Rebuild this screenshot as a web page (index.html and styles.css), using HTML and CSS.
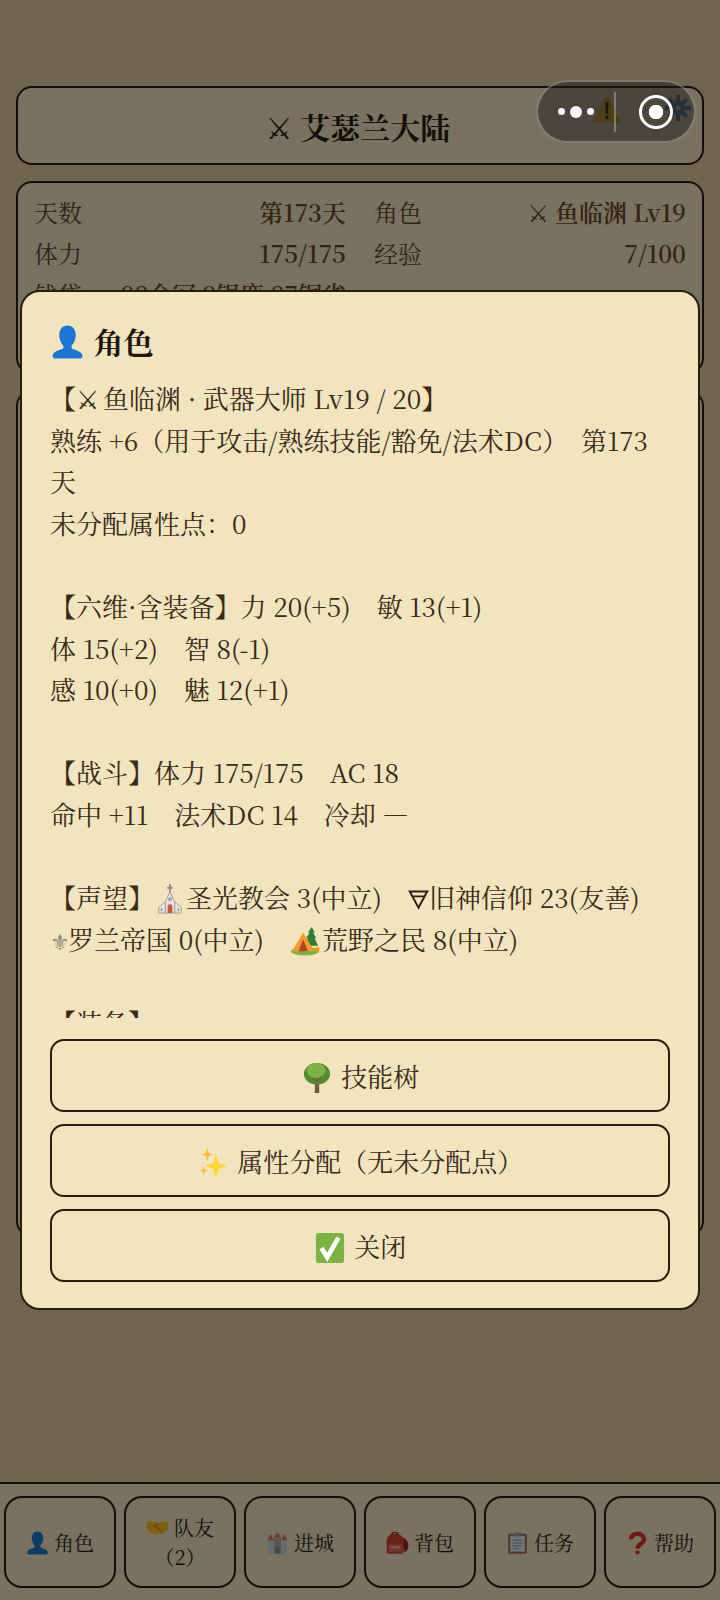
FILE: index.html
```html
<!DOCTYPE html>
<html lang="zh-CN">
<head>
  <meta charset="UTF-8">
  <title>艾瑟兰大陆</title>
  <meta name="viewport" content="width=device-width, initial-scale=1.0">
  <link rel="stylesheet" href="styles.css">
</head>
<body>

  <svg class="defs" width="0" height="0">
    <symbol id="i-person" viewBox="0 0 32 32">
      <path fill="#1976d2" d="M16 0c5 0 8 4 8 9.500 0 4-2 8-4 10v2.500c2 2 9.500 2 10.500 7 0 1.500-1 3-2 3h-25c-1 0-2-1.500-2-3 1-5 8.500-5 10.500-7v-2.500c-2-2-4-6-4-10C8 4 11 0 16 0z"/>
    </symbol>
    <symbol id="i-church" viewBox="0 0 32 32">
      <path fill="#a1887f" d="M15 0h2v3h2v2h-2v4h-2V5h-2V3h2z"/>
      <path fill="#e6e2dd" stroke="#a89a94" d="M16 8l5 11v12H11V19z"/>
      <path fill="#e6e2dd" stroke="#a89a94" d="M11 19l-7 6v6h7zM21 19l7 6v6h-7z"/>
      <path fill="#c8553d" d="M13.500 31v-7a2.500 2.500 0 0 1 5 0v7z"/>
      <circle cx="16" cy="16" r="2" fill="#90a4ae"/>
      <path fill="#90a4ae" d="M6 26h2v3H6zM24 26h2v3h-2z"/>
    </symbol>
    <symbol id="i-earth" viewBox="0 0 24 24">
      <path fill="none" stroke="#2b1d0e" stroke-width="2.200" d="M2 3.500h20L12 22zM6 9h12"/>
    </symbol>
    <symbol id="i-tent" viewBox="0 0 32 32">
      <path fill="#2e7d32" d="M22 1l3.500 6h-2l3.500 6h-2l4 8H14l4-8h-2l4-6h-2z"/>
      <ellipse cx="15" cy="27" rx="15" ry="4.500" fill="#7cb342"/>
      <path fill="#f59a2e" d="M13 7L1 27h24z"/>
      <path fill="#b3471d" d="M13 14L8 27h10z"/>
      <circle cx="28" cy="25" r="2.500" fill="#ff9800"/>
    </symbol>
    <symbol id="i-tree" viewBox="0 0 32 32">
      <path fill="#795548" d="M14 18h4l.500 14h-5z"/>
      <ellipse cx="16" cy="11.500" rx="14" ry="11.500" fill="#558b2f"/>
      <ellipse cx="15" cy="8" rx="10" ry="8" fill="#7cb342"/>
      <path fill="none" stroke="#795548" stroke-width="1.500" d="M16 20l-5-4M16 20l5-5"/>
    </symbol>
    <symbol id="i-spark" viewBox="0 0 32 32">
      <path fill="#fdd835" d="M19 6l3 10 9 3-9 3-3 10-3-10-9-3 9-3z"/>
      <path fill="#fbb829" d="M10 0l1.500 5.500L16 7l-4.500 1.500L10 14 8.500 8.500 4 7l4.500-1.500zM6 19l1 4 3.500 1-3.500 1-1 5-1-5L1.500 24 5 23z"/>
    </symbol>
    <symbol id="i-check" viewBox="0 0 32 32">
      <rect x="1" y="0" width="30" height="32" rx="3" fill="#7cb342"/>
      <path fill="none" stroke="#fff" stroke-width="5" d="M7 16l6 10L25 5"/>
    </symbol>
    <symbol id="i-hands" viewBox="0 0 32 32">
      <path fill="#fcc21b" d="M1 8c5-2 9-1 15 1 6-2 10-3 15-1v9c-2 4-8 8-15 8S3 21 1 17z"/>
      <path fill="none" stroke="#c98a10" stroke-width="1.500" d="M11 12l6 5 5 5M16 9l-4 5"/>
    </symbol>
    <symbol id="i-castle" viewBox="0 0 32 32">
      <path fill="#cfd8dc" d="M3 12h7v6h12v-6h7v19H3z"/>
      <path fill="#bcaaa4" d="M11 8h10v23H11z"/>
      <path fill="#e2725b" d="M2 12l4.500-9L11 12zM21 12l4.500-9L30 12zM11 8l5-7 5 7z"/>
      <path fill="#78909c" d="M13 31v-7a3 3 0 0 1 6 0v7z"/>
    </symbol>
    <symbol id="i-bag" viewBox="0 0 32 32">
      <path fill="#9c2a1c" d="M22 8c6 1 10 7 9 14-.500 4-3 6-6 7z"/>
      <path fill="#d9432f" d="M4 31c-2 0-3-1-3-3V13C1 6 6 3 12.500 3S24 6 24 13v15c0 2-1 3-3 3z"/>
      <path fill="none" stroke="#9c2a1c" stroke-width="2" d="M8 5c0-5 9-5 9 0"/>
      <rect x="3" y="18" width="19" height="10" rx="2" fill="#e8705c"/>
      <path fill="#f6c9a0" d="M6 21h13v2H6z"/>
    </symbol>
    <symbol id="i-clip" viewBox="0 0 32 32">
      <rect x="3" y="3" width="26" height="28" rx="2" fill="#a1734f"/>
      <rect x="6" y="6" width="20" height="22" fill="#e3edf3"/>
      <rect x="11" y="1" width="10" height="6" rx="1" fill="#90a4ae"/>
      <path fill="none" stroke="#90a4ae" stroke-width="1.500" d="M9 12h14M9 16h14M9 20h14M9 24h9"/>
    </symbol>
    <symbol id="i-help" viewBox="0 0 32 32">
      <path fill="none" stroke="#e0352b" stroke-width="6" d="M7 11c0-11 18-10 18 0 0 6-9 6-9 13"/>
      <circle cx="16" cy="29" r="3" fill="#e0352b"/>
    </symbol>
  </svg>

  <main class="page">
    <header class="title-bar">
      <h1 class="game-title"><span class="sym">⚔</span> 艾瑟兰大陆</h1>
      <div class="tools">
        <svg class="tool-warn" viewBox="0 0 26 27">
          <path fill="#f7c52b" d="M13 0l13 27H0z"/>
          <path fill="#222" d="M11.500 8h3l-.500 11h-2zM11.500 21h3v3h-3z"/>
        </svg>
        <svg class="tool-gear" viewBox="0 0 26 26">
          <circle cx="13" cy="13" r="5" fill="none" stroke="#5f8fc0" stroke-width="5"/>
          <path fill="none" stroke="#5f8fc0" stroke-width="4" d="M13 0v6M13 20v6M0 13h6M20 13h6M4 4l4 4M18 18l4 4M22 4l-4 4M8 18l-4 4"/>
        </svg>
      </div>
    </header>

    <section class="stats">
      <div class="stat"><span class="stat-key">天数</span><b>第173天</b></div>
      <div class="stat"><span class="stat-key">角色</span><b><span class="sym">⚔</span> 鱼临渊 Lv19</b></div>
      <div class="stat"><span class="stat-key">体力</span><b>175/175</b></div>
      <div class="stat"><span class="stat-key">经验</span><b>7/100</b></div>
      <div class="stat"><span class="stat-key">钱袋</span><b>88金冠 9银鹿 87铜雀</b></div>
    </section>

    <section class="board"></section>
  </main>

  <nav class="tabbar">
    <button class="tab"><svg class="ico-sm"><use href="#i-person"/></svg> 角色</button>
    <button class="tab"><svg class="ico-sm"><use href="#i-hands"/></svg> 队友（2）</button>
    <button class="tab"><svg class="ico-sm"><use href="#i-castle"/></svg> 进城</button>
    <button class="tab"><svg class="ico-sm"><use href="#i-bag"/></svg> 背包</button>
    <button class="tab"><svg class="ico-sm"><use href="#i-clip"/></svg> 任务</button>
    <button class="tab"><svg class="ico-sm"><use href="#i-help"/></svg> 帮助</button>
  </nav>

  <div class="mask">
    <div class="modal">
      <h2 class="modal-title"><svg class="ico-title"><use href="#i-person"/></svg> 角色</h2>
      <div class="modal-body">【<span class="sym sym-sword">⚔</span> 鱼临渊 · 武器大师 Lv19 / 20】
熟练 +6（用于攻击/熟练技能/豁免/法术DC）　第173天
未分配属性点：0

【六维·含装备】力 20(+5)　敏 13(+1)
体 15(+2)　智 8(-1)
感 10(+0)　魅 12(+1)

【战斗】体力 175/175　AC 18
命中 +11　法术DC 14　冷却 —

【声望】<svg class="ico"><use href="#i-church"/></svg>圣光教会 3(中立)　<svg class="ico-tri"><use href="#i-earth"/></svg>旧神信仰 23(友善)
<span class="sym sym-light">⚜</span>罗兰帝国 0(中立)　<svg class="ico"><use href="#i-tent"/></svg>荒野之民 8(中立)

【装备】
武器 长剑
护甲 锁子甲</div>
      <div class="modal-actions">
        <button class="action"><svg class="ico"><use href="#i-tree"/></svg> 技能树</button>
        <button class="action"><svg class="ico"><use href="#i-spark"/></svg> 属性分配（无未分配点）</button>
        <button class="action"><svg class="ico"><use href="#i-check"/></svg> 关闭</button>
      </div>
    </div>
  </div>

  <!-- 小程序胶囊 -->
  <div class="capsule">
    <div class="capsule-dots"><i></i><i class="big"></i><i></i></div>
    <div class="capsule-line"></div>
    <div class="capsule-ring"></div>
  </div>

</body>
</html>
```

FILE: styles.css
```css
* {
  box-sizing: border-box;
}

html, body {
  margin: 0;
  height: 1600px;
  overflow: hidden;
}

body {
  display: flex;
  flex-direction: column;
  background: #dec8a0;
  color: #2b1d0e;
  font-family: "Noto Serif CJK SC", "Liberation Serif", serif;
}

.defs {
  position: absolute;
}

.sym {
  font-family: "DejaVu Sans", sans-serif;
  font-weight: normal;
  line-height: 1;
}

.sym-sword {
  margin-right: -3px;
}

.sym-light {
  display: inline-block;
  width: 18px;
  color: #8f8a7a;
  font-size: 22px;
}

.page {
  flex: 1;
  display: flex;
  flex-direction: column;
  gap: 16px;
  padding: 86px 16px 0;
}

.title-bar {
  position: relative;
  height: 79px;
  display: flex;
  align-items: center;
  justify-content: center;
  padding-right: 4px;
  background: #f3e4c0;
  border: 2px solid #2b1d0e;
  border-radius: 16px;
}

.game-title {
  margin: 0;
  font-size: 30px;
  font-weight: bold;
}

.tools {
  position: absolute;
  top: 6px;
  right: 11px;
  display: flex;
  align-items: center;
  gap: 44px;
}

.tool-warn {
  width: 28px;
  height: 28px;
}

.tool-gear {
  width: 26px;
  height: 26px;
}

.stats {
  height: 193px;
  display: grid;
  grid-template-columns: 1fr 1fr;
  grid-auto-rows: 41px;
  column-gap: 28px;
  padding: 8px 16px;
  background: #f3e4c0;
  border: 2px solid #2b1d0e;
  border-radius: 16px;
  font-size: 24px;
}

.stat {
  display: flex;
  align-items: center;
  justify-content: space-between;
}

.stat-key {
  color: #5b4a33;
}

.stat b {
  color: #6b4a24;
  font-weight: 600;
}

.board {
  height: 847px;
  background: #f3e4c0;
  border: 2px solid #2b1d0e;
  border-radius: 16px;
}

.tabbar {
  height: 118px;
  display: grid;
  grid-template-columns: repeat(6, 112px);
  column-gap: 8px;
  padding: 12px 4px 0;
  background: #f3e4c0;
  border-top: 2px solid #2b1d0e;
}

.tab {
  height: 92px;
  padding: 0 6px;
  background: transparent;
  border: 2px solid #2b1d0e;
  border-radius: 18px;
  color: #2b1d0e;
  font-family: inherit;
  font-size: 20px;
  line-height: 29px;
}

.ico-sm {
  width: 23px;
  height: 24px;
  vertical-align: -4px;
}

.mask {
  position: fixed;
  inset: 0;
  display: flex;
  align-items: center;
  justify-content: center;
  background: rgba(0, 0, 0, 0.5);
}

.modal {
  width: 680px;
  height: 1020px;
  padding: 26px 28px;
  background: #f3e4c0;
  border: 2px solid #2b1d0e;
  border-radius: 20px;
}

.modal-title {
  height: 46px;
  margin: 0 0 13px;
  font-size: 30px;
  line-height: 46px;
  font-weight: bold;
  color: #20150a;
}

.ico-title {
  width: 33px;
  height: 34px;
  margin: 0 2px 0 1px;
  vertical-align: -5px;
}

.modal-body {
  height: 641px;
  overflow: hidden;
  font-size: 26px;
  line-height: 41.600px;
  white-space: pre-wrap;
  color: #3a2a16;
}

.ico {
  width: 32px;
  height: 30px;
  vertical-align: -6px;
}

.ico-tri {
  width: 21px;
  height: 24px;
  vertical-align: -3px;
}

.modal-actions {
  display: flex;
  flex-direction: column;
  gap: 12px;
  margin-top: 21px;
}

.action {
  height: 73px;
  background: transparent;
  border: 2px solid #2b1d0e;
  border-radius: 14px;
  color: #3a2a16;
  font-family: inherit;
  font-size: 26px;
}

.action .ico {
  margin-right: 2px;
}

.capsule {
  position: fixed;
  top: 80px;
  left: 536px;
  width: 160px;
  height: 63px;
  display: flex;
  align-items: center;
  background: rgba(30, 26, 22, 0.5);
  border: 2px solid rgba(255, 255, 255, 0.3);
  border-radius: 32px;
}

.capsule-dots {
  width: 76px;
  display: flex;
  align-items: center;
  justify-content: center;
  gap: 5px;
}

.capsule-dots i {
  width: 7px;
  height: 7px;
  border-radius: 50%;
  background: #fff;
}

.capsule-dots i.big {
  width: 12px;
  height: 12px;
}

.capsule-line {
  width: 2px;
  height: 40px;
  background: rgba(255, 255, 255, 0.3);
}

.capsule-ring {
  width: 34px;
  height: 34px;
  margin-left: 23px;
  border: 3.500px solid #fff;
  border-radius: 50%;
  background: radial-gradient(circle, #fff 0 7px, transparent 7.500px);
}
```
